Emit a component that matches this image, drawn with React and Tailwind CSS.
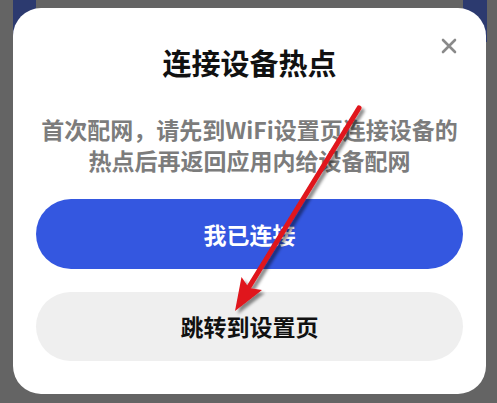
import React from "react";

const font = { fontFamily: '"Noto Sans CJK SC", "Noto Sans", sans-serif' };

function CloseIcon() {
  return (
    <svg width="16" height="16" viewBox="0 0 16 16" fill="none">
      <path d="M2 2L14 14M14 2L2 14" stroke="#8a8a8a" strokeWidth="2.6" strokeLinecap="round" />
    </svg>
  );
}

function Arrow() {
  return (
    <svg className="absolute inset-0 pointer-events-none" width="497" height="403" viewBox="0 0 497 403">
      <defs>
        <filter id="sh" x="-20%" y="-20%" width="140%" height="140%">
          <feDropShadow dx="3" dy="3" stdDeviation="1.5" floodColor="#000" floodOpacity="0.45" />
        </filter>
      </defs>
      <g filter="url(#sh)">
        <line x1="359" y1="108" x2="249" y2="287" stroke="#e0141b" strokeWidth="5" strokeLinecap="round" />
        <polygon points="235,311 262,290 249,288 241.5,277" fill="#e0141b" />
      </g>
    </svg>
  );
}

export default function App() {
  return (
    <div className="relative w-[497px] h-[403px] bg-[#646464] overflow-hidden pl-[13px] pt-[8px]" style={font}>
      {/* backdrop bits peeking out behind the sheet */}
      <div className="absolute left-[13px] top-0 w-[23px] h-[42px] bg-[#2c3a6f]" />
      <div className="absolute left-[463px] top-0 w-[24px] h-[42px] bg-[#2c3a6f]" />

      <div className="relative w-[473px] h-[386px] bg-white rounded-[28px] flex flex-col items-center pt-[36px] px-[23px]">
        <button className="absolute top-[30px] right-[29px]">
          <CloseIcon />
        </button>

        <h2 className="text-[29px] leading-[36px] font-bold text-[#111]">连接设备热点</h2>

        <p className="mt-[34px] text-[23px] leading-[31px] font-bold text-[#7c7c7c] text-center w-[430px]">
          首次配网，请先到WiFi设置页连接设备的
          <br />
          热点后再返回应用内给设备配网
        </p>

        <button className="mt-[23px] w-full h-[70px] rounded-full bg-[#3457e0] text-white text-[23px] font-bold">
          我已连接
        </button>

        <button className="mt-[23px] w-full h-[69px] rounded-full bg-[#efefef] text-[#111] text-[23px] font-bold">
          跳转到设置页
        </button>
      </div>

      <Arrow />
    </div>
  );
}
